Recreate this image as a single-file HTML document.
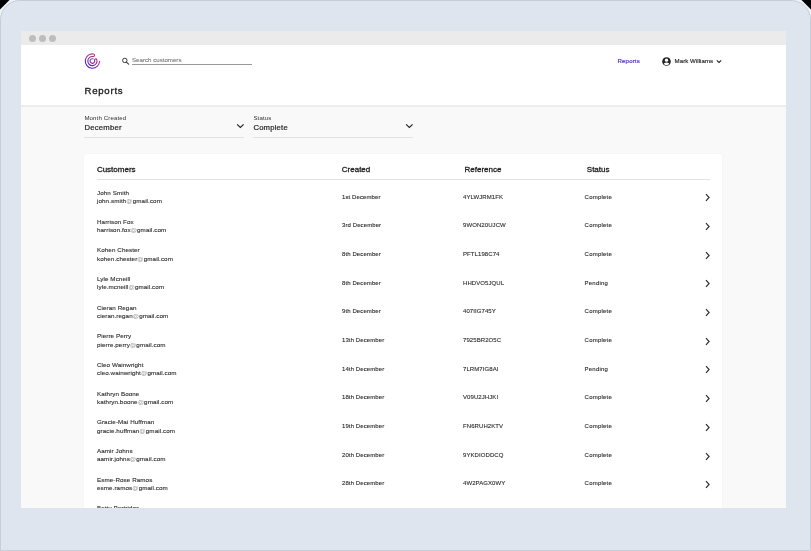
<!DOCTYPE html>
<html><head><meta charset="utf-8">
<style>
*{margin:0;padding:0;box-sizing:border-box}
html,body{width:811px;height:551px;overflow:hidden;background:#eef1f5}
body{font-family:"Liberation Sans",sans-serif;position:relative}
.frame{position:absolute;left:0;top:0;width:811px;height:551px;background:#dfe5ee;border:1px solid #c6ced9;border-radius:20px 20px 0 0}
.win{position:absolute;left:21px;top:31px;width:765px;height:477px;background:#f9f9f9;overflow:hidden}
.in{position:absolute;left:-21px;top:-31px;width:811px;height:551px;will-change:transform}
.abs{position:absolute;white-space:nowrap;line-height:1}
.th{color:#1e1e1e;-webkit-text-stroke:0.3px #1e1e1e}
.nm{color:#2e2e2e;-webkit-text-stroke:0.12px #2e2e2e;letter-spacing:0.08px}
.vl{color:#2e2e2e;-webkit-text-stroke:0.12px #2e2e2e}
.at{color:#b0b0b0;-webkit-text-stroke:0.1px #b0b0b0}
</style></head><body>
<svg class="abs" style="left:0;top:0" width="811" height="12"><polygon points="0,0 9.5,0 0,9.5" fill="#000"/><polygon points="811,0 801.5,0 811,9.5" fill="#000"/></svg>
<div class="frame"></div>
<div class="win"><div class="in">
  <!-- title bar -->
  <div class="abs" style="left:21px;top:31px;width:765px;height:14px;background:#ebebeb"></div>
  <div class="abs" style="left:29px;top:35px;width:7px;height:7px;border-radius:50%;background:#bdbdbd"></div>
  <div class="abs" style="left:39px;top:35px;width:7px;height:7px;border-radius:50%;background:#bdbdbd"></div>
  <div class="abs" style="left:49px;top:35px;width:7px;height:7px;border-radius:50%;background:#bdbdbd"></div>
  <!-- header -->
  <div class="abs" style="left:21px;top:45px;width:765px;height:60px;background:#fff"></div>
  <div class="abs" style="left:21px;top:105px;width:765px;height:2px;background:#ececec"></div>
  <!-- logo -->
  <svg class="abs" style="left:82px;top:51px" width="20" height="20" viewBox="0 0 20 20">
    <defs><linearGradient id="lg" gradientUnits="userSpaceOnUse" x1="17" y1="3" x2="4" y2="17"><stop offset="0" stop-color="#e23a5c"/><stop offset="0.5" stop-color="#8a2a9e"/><stop offset="1" stop-color="#2a1ed8"/></linearGradient></defs>
    <path d="M17.55 10.30 A7.15 7.15 0 1 1 11.52 2.99 A1.28 1.28 0 0 1 11.12 5.51 A4.6 4.6 0 1 0 14.80 8.71 A1.15 1.15 0 0 0 12.60 9.38 A2.3 2.3 0 1 1 11.00 7.83" fill="none" stroke="url(#lg)" stroke-width="1.1" stroke-linecap="round"/>
  </svg>
  <!-- search -->
  <svg class="abs" style="left:121px;top:57px" width="9" height="9" viewBox="0 0 9 9"><circle cx="3.8" cy="3.4" r="2.2" fill="none" stroke="#3a3a3a" stroke-width="1"/><path d="M5.4 5.1 L7.6 7.1" stroke="#3a3a3a" stroke-width="1.15" stroke-linecap="round"/></svg>
  <div class="abs " style="left:132.00px;top:56.57px;font-size:6.15px;color:#7a7a7a;-webkit-text-stroke:0.1px #7a7a7a">Search customers</div>
  <div class="abs" style="left:132px;top:64px;width:120px;height:1px;background:#9a9a9a"></div>
  <!-- nav -->
  <div class="abs " style="left:617.50px;top:57.52px;font-size:6.1px;color:#4a2cb8;-webkit-text-stroke:0.15px #4a2cb8;letter-spacing:0.15px">Reports</div>
  <svg class="abs" style="left:662px;top:57px" width="9" height="9" viewBox="0 0 9 9"><circle cx="4.5" cy="4.5" r="4.3" fill="#222"/><circle cx="4.5" cy="3.2" r="1.65" fill="#fff"/><path d="M1.8 6.6 Q4.5 4.6 7.2 6.6 L6.5 7.6 Q4.5 8.6 2.5 7.6 Z" fill="#fff"/></svg>
  <div class="abs " style="left:674.60px;top:57.52px;font-size:6.1px;color:#1e1e1e;-webkit-text-stroke:0.15px #1e1e1e;letter-spacing:0.05px">Mark Williams</div>
  <svg class="abs" style="left:716.2px;top:58.5px" width="6" height="5" viewBox="0 0 6 5"><path d="M0.8 1.4 L3 3.4 L5.2 1.4" fill="none" stroke="#222" stroke-width="1.1"/></svg>
  <!-- title -->
  <div class="abs " style="left:84.50px;top:85.84px;font-size:9.6px;color:#1e1e1e;-webkit-text-stroke:0.35px #1e1e1e;letter-spacing:0.75px">Reports</div>
  <!-- filters -->
  <div class="abs " style="left:84.40px;top:114.61px;font-size:6.1px;color:#333;letter-spacing:0.12px">Month Created</div>
  <div class="abs " style="left:84.60px;top:123.76px;font-size:7.7px;color:#222;-webkit-text-stroke:0.2px #222;letter-spacing:0.2px">December</div>
  <svg class="abs" style="left:236px;top:123px" width="9" height="6" viewBox="0 0 9 6"><path d="M1.1 1.4 L4.35 4.4 L7.6 1.4" fill="none" stroke="#222" stroke-width="1.15"/></svg>
  <div class="abs" style="left:84px;top:137px;width:160px;height:1px;background:#e2e2e2"></div>
  <div class="abs " style="left:253.40px;top:114.61px;font-size:6.1px;color:#333;letter-spacing:0.12px">Status</div>
  <div class="abs " style="left:253.40px;top:123.76px;font-size:7.7px;color:#222;-webkit-text-stroke:0.2px #222;letter-spacing:0.2px">Complete</div>
  <svg class="abs" style="left:405px;top:123px" width="9" height="6" viewBox="0 0 9 6"><path d="M1.1 1.4 L4.35 4.4 L7.6 1.4" fill="none" stroke="#222" stroke-width="1.15"/></svg>
  <div class="abs" style="left:253px;top:137px;width:160px;height:1px;background:#e2e2e2"></div>
  <!-- card -->
  <div class="abs" style="left:84px;top:154px;width:638px;height:400px;background:#fff;border-radius:2px;box-shadow:0 0 2px rgba(0,0,0,0.06)"></div>
  <div class="abs th" style="left:96.90px;top:166.20px;font-size:8px;">Customers</div>
  <div class="abs th" style="left:341.80px;top:166.20px;font-size:8px;">Created</div>
  <div class="abs th" style="left:464.50px;top:166.20px;font-size:8px;">Reference</div>
  <div class="abs th" style="left:586.80px;top:166.20px;font-size:8px;">Status</div>
  <div class="abs" style="left:97px;top:179px;width:613px;height:1px;background:#e2e2e2"></div>
<div class="abs nm" style="left:97.00px;top:189.89px;font-size:6.25px;">John Smith</div>
<div class="abs nm" style="left:97.00px;top:198.29px;font-size:6.25px;">john.smith<span class="at">@</span>gmail.com</div>
<div class="abs vl" style="left:342.00px;top:193.50px;font-size:6.0px;letter-spacing:0.1px">1st December</div>
<div class="abs vl" style="left:463.00px;top:193.50px;font-size:6.0px;letter-spacing:0.08px">4YLWJRM1FK</div>
<div class="abs vl" style="left:584.60px;top:193.50px;font-size:6.0px;letter-spacing:0.22px">Complete</div>
<svg class="abs" style="left:705px;top:193.40px" width="6" height="9" viewBox="0 0 6 9"><path d="M1.0 1.2 L4.1 4.5 L1.0 7.8" fill="none" stroke="#2b2b2b" stroke-width="1.15"/></svg>
<div class="abs nm" style="left:97.00px;top:218.57px;font-size:6.25px;">Harrison Fox</div>
<div class="abs nm" style="left:97.00px;top:226.97px;font-size:6.25px;">harrison.fox<span class="at">@</span>gmail.com</div>
<div class="abs vl" style="left:342.00px;top:222.18px;font-size:6.0px;letter-spacing:0.1px">3rd December</div>
<div class="abs vl" style="left:463.00px;top:222.18px;font-size:6.0px;letter-spacing:0.08px">9WON20UJCW</div>
<div class="abs vl" style="left:584.60px;top:222.18px;font-size:6.0px;letter-spacing:0.22px">Complete</div>
<svg class="abs" style="left:705px;top:222.08px" width="6" height="9" viewBox="0 0 6 9"><path d="M1.0 1.2 L4.1 4.5 L1.0 7.8" fill="none" stroke="#2b2b2b" stroke-width="1.15"/></svg>
<div class="abs nm" style="left:97.00px;top:247.25px;font-size:6.25px;">Kohen Chester</div>
<div class="abs nm" style="left:97.00px;top:255.65px;font-size:6.25px;">kohen.chester<span class="at">@</span>gmail.com</div>
<div class="abs vl" style="left:342.00px;top:250.86px;font-size:6.0px;letter-spacing:0.1px">8th December</div>
<div class="abs vl" style="left:463.00px;top:250.86px;font-size:6.0px;letter-spacing:0.08px">PFTL198C74</div>
<div class="abs vl" style="left:584.60px;top:250.86px;font-size:6.0px;letter-spacing:0.22px">Complete</div>
<svg class="abs" style="left:705px;top:250.76px" width="6" height="9" viewBox="0 0 6 9"><path d="M1.0 1.2 L4.1 4.5 L1.0 7.8" fill="none" stroke="#2b2b2b" stroke-width="1.15"/></svg>
<div class="abs nm" style="left:97.00px;top:275.93px;font-size:6.25px;">Lyle Mcneill</div>
<div class="abs nm" style="left:97.00px;top:284.33px;font-size:6.25px;">lyle.mcneill<span class="at">@</span>gmail.com</div>
<div class="abs vl" style="left:342.00px;top:279.54px;font-size:6.0px;letter-spacing:0.1px">8th December</div>
<div class="abs vl" style="left:463.00px;top:279.54px;font-size:6.0px;letter-spacing:0.08px">HHDVO5JQUL</div>
<div class="abs vl" style="left:584.60px;top:279.54px;font-size:6.0px;letter-spacing:0.22px">Pending</div>
<svg class="abs" style="left:705px;top:279.44px" width="6" height="9" viewBox="0 0 6 9"><path d="M1.0 1.2 L4.1 4.5 L1.0 7.8" fill="none" stroke="#2b2b2b" stroke-width="1.15"/></svg>
<div class="abs nm" style="left:97.00px;top:304.61px;font-size:6.25px;">Cieran Regan</div>
<div class="abs nm" style="left:97.00px;top:313.01px;font-size:6.25px;">cieran.regan<span class="at">@</span>gmail.com</div>
<div class="abs vl" style="left:342.00px;top:308.22px;font-size:6.0px;letter-spacing:0.1px">9th December</div>
<div class="abs vl" style="left:463.00px;top:308.22px;font-size:6.0px;letter-spacing:0.08px">407IIG745Y</div>
<div class="abs vl" style="left:584.60px;top:308.22px;font-size:6.0px;letter-spacing:0.22px">Complete</div>
<svg class="abs" style="left:705px;top:308.12px" width="6" height="9" viewBox="0 0 6 9"><path d="M1.0 1.2 L4.1 4.5 L1.0 7.8" fill="none" stroke="#2b2b2b" stroke-width="1.15"/></svg>
<div class="abs nm" style="left:97.00px;top:333.29px;font-size:6.25px;">Pierre Perry</div>
<div class="abs nm" style="left:97.00px;top:341.69px;font-size:6.25px;">pierre.perry<span class="at">@</span>gmail.com</div>
<div class="abs vl" style="left:342.00px;top:336.90px;font-size:6.0px;letter-spacing:0.1px">13th December</div>
<div class="abs vl" style="left:463.00px;top:336.90px;font-size:6.0px;letter-spacing:0.08px">7925BR2O5C</div>
<div class="abs vl" style="left:584.60px;top:336.90px;font-size:6.0px;letter-spacing:0.22px">Complete</div>
<svg class="abs" style="left:705px;top:336.80px" width="6" height="9" viewBox="0 0 6 9"><path d="M1.0 1.2 L4.1 4.5 L1.0 7.8" fill="none" stroke="#2b2b2b" stroke-width="1.15"/></svg>
<div class="abs nm" style="left:97.00px;top:361.97px;font-size:6.25px;">Cleo Wainwright</div>
<div class="abs nm" style="left:97.00px;top:370.37px;font-size:6.25px;">cleo.wainwright<span class="at">@</span>gmail.com</div>
<div class="abs vl" style="left:342.00px;top:365.58px;font-size:6.0px;letter-spacing:0.1px">14th December</div>
<div class="abs vl" style="left:463.00px;top:365.58px;font-size:6.0px;letter-spacing:0.08px">7LRM7IG8AI</div>
<div class="abs vl" style="left:584.60px;top:365.58px;font-size:6.0px;letter-spacing:0.22px">Pending</div>
<svg class="abs" style="left:705px;top:365.48px" width="6" height="9" viewBox="0 0 6 9"><path d="M1.0 1.2 L4.1 4.5 L1.0 7.8" fill="none" stroke="#2b2b2b" stroke-width="1.15"/></svg>
<div class="abs nm" style="left:97.00px;top:390.65px;font-size:6.25px;">Kathryn Boone</div>
<div class="abs nm" style="left:97.00px;top:399.05px;font-size:6.25px;">kathryn.boone<span class="at">@</span>gmail.com</div>
<div class="abs vl" style="left:342.00px;top:394.26px;font-size:6.0px;letter-spacing:0.1px">18th December</div>
<div class="abs vl" style="left:463.00px;top:394.26px;font-size:6.0px;letter-spacing:0.08px">V09U2JHJKI</div>
<div class="abs vl" style="left:584.60px;top:394.26px;font-size:6.0px;letter-spacing:0.22px">Complete</div>
<svg class="abs" style="left:705px;top:394.16px" width="6" height="9" viewBox="0 0 6 9"><path d="M1.0 1.2 L4.1 4.5 L1.0 7.8" fill="none" stroke="#2b2b2b" stroke-width="1.15"/></svg>
<div class="abs nm" style="left:97.00px;top:419.33px;font-size:6.25px;">Gracie-Mai Huffman</div>
<div class="abs nm" style="left:97.00px;top:427.73px;font-size:6.25px;">gracie.huffman<span class="at">@</span>gmail.com</div>
<div class="abs vl" style="left:342.00px;top:422.94px;font-size:6.0px;letter-spacing:0.1px">19th December</div>
<div class="abs vl" style="left:463.00px;top:422.94px;font-size:6.0px;letter-spacing:0.08px">FN6RUH2KTV</div>
<div class="abs vl" style="left:584.60px;top:422.94px;font-size:6.0px;letter-spacing:0.22px">Complete</div>
<svg class="abs" style="left:705px;top:422.84px" width="6" height="9" viewBox="0 0 6 9"><path d="M1.0 1.2 L4.1 4.5 L1.0 7.8" fill="none" stroke="#2b2b2b" stroke-width="1.15"/></svg>
<div class="abs nm" style="left:97.00px;top:448.01px;font-size:6.25px;">Aamir Johns</div>
<div class="abs nm" style="left:97.00px;top:456.41px;font-size:6.25px;">aamir.johns<span class="at">@</span>gmail.com</div>
<div class="abs vl" style="left:342.00px;top:451.62px;font-size:6.0px;letter-spacing:0.1px">20th December</div>
<div class="abs vl" style="left:463.00px;top:451.62px;font-size:6.0px;letter-spacing:0.08px">9YKDIODDCQ</div>
<div class="abs vl" style="left:584.60px;top:451.62px;font-size:6.0px;letter-spacing:0.22px">Complete</div>
<svg class="abs" style="left:705px;top:451.52px" width="6" height="9" viewBox="0 0 6 9"><path d="M1.0 1.2 L4.1 4.5 L1.0 7.8" fill="none" stroke="#2b2b2b" stroke-width="1.15"/></svg>
<div class="abs nm" style="left:97.00px;top:476.69px;font-size:6.25px;">Esme-Rose Ramos</div>
<div class="abs nm" style="left:97.00px;top:485.09px;font-size:6.25px;">esme.ramos<span class="at">@</span>gmail.com</div>
<div class="abs vl" style="left:342.00px;top:480.30px;font-size:6.0px;letter-spacing:0.1px">28th December</div>
<div class="abs vl" style="left:463.00px;top:480.30px;font-size:6.0px;letter-spacing:0.08px">4W2PAGX0WY</div>
<div class="abs vl" style="left:584.60px;top:480.30px;font-size:6.0px;letter-spacing:0.22px">Complete</div>
<svg class="abs" style="left:705px;top:480.20px" width="6" height="9" viewBox="0 0 6 9"><path d="M1.0 1.2 L4.1 4.5 L1.0 7.8" fill="none" stroke="#2b2b2b" stroke-width="1.15"/></svg>
<div class="abs nm" style="left:97.00px;top:505.37px;font-size:6.25px;">Betty Partridge</div>
<div class="abs nm" style="left:97.00px;top:513.77px;font-size:6.25px;">betty.partridge<span class="at">@</span>gmail.com</div>
<div class="abs vl" style="left:342.00px;top:508.98px;font-size:6.0px;letter-spacing:0.1px">29th December</div>
<div class="abs vl" style="left:463.00px;top:508.98px;font-size:6.0px;letter-spacing:0.08px">K3PL0RT2MB</div>
<div class="abs vl" style="left:584.60px;top:508.98px;font-size:6.0px;letter-spacing:0.22px">Complete</div>
<svg class="abs" style="left:705px;top:508.88px" width="6" height="9" viewBox="0 0 6 9"><path d="M1.0 1.2 L4.1 4.5 L1.0 7.8" fill="none" stroke="#2b2b2b" stroke-width="1.15"/></svg>
</div></div>
</body></html>
